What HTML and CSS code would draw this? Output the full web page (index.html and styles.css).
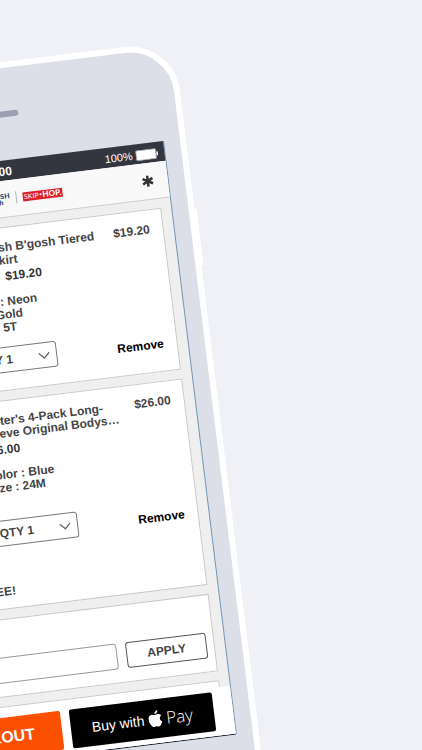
FILE: index.html
```html
<!DOCTYPE html>
<html lang="en">

<head>
    <meta charset="UTF-8">
    <meta name="viewport" content="width=device-width, initial-scale=1.0">
    <title>Shopping Bag</title>
    <link rel="stylesheet" href="styles.css">
</head>

<body>
    <div class="phone">
        <div class="side-button"></div>
        <div class="phone-top">
            <div class="speaker"></div>
        </div>

        <div class="screen">
            <div class="status-bar">
                <span class="carrier">Carrier</span>
                <span class="time">12:00</span>
                <span class="battery">100%
                    <svg class="battery-icon" width="23" height="11" viewBox="0 0 23 11">
                        <rect x="0.5" y="0.5" width="20" height="10" rx="1.5" fill="#fff" stroke="#a4a5ac" />
                        <rect x="21" y="3.5" width="1.5" height="4" rx="0.7" fill="#fff" />
                    </svg>
                </span>
            </div>

            <header class="header">
                <span></span>
                <div class="brands">
                    <span class="brand brand-carters">carter's</span>
                    <span class="brand brand-oshkosh">OSHKOSH<small>B'gosh</small></span>
                    <span class="brand-skiphop">SKIP<i></i><b>HOP.</b></span>
                </div>
                <svg class="header-icon" width="12" height="12" viewBox="0 0 12 12">
                    <path d="M6 0.4V11.6M1 3.3L11 8.7M11 3.3L1 8.7" stroke="#333" stroke-width="2.5" />
                </svg>
            </header>

            <main class="bag">
                <section class="card">
                    <div class="item">
                        <div class="item-photo"></div>
                        <div class="item-info">
                            <h2 class="item-title">OshKosh B'gosh Tiered<br>Tulle Skirt</h2>
                            <p class="item-price"><s>$32.00</s> <span>$19.20</span></p>
                            <p class="item-details">Color : Neon<br>Pink Gold<br>Size : 5T</p>
                        </div>
                        <span class="item-total">$19.20</span>
                    </div>
                    <div class="item-actions">
                        <div class="qty">
                            <select class="qty-select" aria-label="Skirt quantity">
                                <option>QTY 1</option>
                                <option>QTY 2</option>
                            </select>
                            <svg class="qty-arrow" width="12" height="7" viewBox="0 0 12 7">
                                <path d="M0.8 0.8L6 6L11.2 0.8" fill="none" stroke="#666" stroke-width="1.3" />
                            </svg>
                        </div>
                        <button class="remove-button">Remove</button>
                    </div>
                </section>

                <section class="card">
                    <div class="item">
                        <div class="item-photo"></div>
                        <div class="item-info">
                            <h2 class="item-title">Carter's 4-Pack Long-<br>Sleeve Original Bodys…</h2>
                            <p class="item-price">$26.00</p>
                            <p class="item-details">Color : Blue<br>Size : 24M</p>
                        </div>
                        <span class="item-total">$26.00</span>
                    </div>
                    <div class="item-actions">
                        <div class="qty">
                            <select class="qty-select" aria-label="Bodysuits quantity">
                                <option>QTY 1</option>
                                <option>QTY 2</option>
                            </select>
                            <svg class="qty-arrow" width="12" height="7" viewBox="0 0 12 7">
                                <path d="M0.8 0.8L6 6L11.2 0.8" fill="none" stroke="#666" stroke-width="1.3" />
                            </svg>
                        </div>
                        <button class="remove-button">Remove</button>
                    </div>
                    <p class="promo">Ships to you FREE!</p>
                </section>

                <section class="card coupon">
                    <label class="coupon-label" for="coupon">Coupon</label>
                    <div class="coupon-row">
                        <input type="text" id="coupon" class="coupon-input">
                        <button class="coupon-button">APPLY</button>
                    </div>
                </section>

                <section class="card"></section>
            </main>

            <footer class="footer">
                <button class="checkout-button">CHECKOUT</button>
                <button class="apple-button">
                    <span>Buy with</span>
                    <svg width="14" height="17" viewBox="0 0 14 17" fill="#fff">
                        <path d="M9.9 0C10 1.1 9.6 2.1 9 2.8C8.4 3.6 7.6 4 6.8 4C6.7 3 7.1 2 7.7 1.3C8.3 0.6 9.2 0.1 9.9 0Z" />
                        <path d="M13.2 5.8C12.1 6.5 11.5 7.5 11.5 8.8C11.5 10.2 12.3 11.4 13.6 11.9C13.3 12.9 12.8 13.8 12.2 14.7C11.5 15.7 10.8 16.6 9.8 16.6C8.8 16.6 8.4 16 7.2 16C6.1 16 5.6 16.6 4.7 16.6C3.7 16.6 2.9 15.7 2.1 14.5C0.9 12.8 0.1 10.6 0.1 8.6C0.1 5.7 2 4.1 3.9 4.1C5 4.1 6 4.8 6.8 4.8C7.5 4.8 8.6 4 10 4.1C11.3 4.1 12.5 4.7 13.2 5.8Z" />
                    </svg>
                    <span class="pay">Pay</span>
                </button>
            </footer>
        </div>
    </div>
</body>

</html>
```
FILE: styles.css
```css
* {
    box-sizing: border-box;
}

body {
    margin: 0;
    height: 100vh;
    overflow: hidden;
    background-color: #f0f1f7;
    font-family: "Liberation Sans", Arial, sans-serif;
    font-size: 12px;
    line-height: 13px;
    color: #444;
}

h2,
p {
    margin: 0;
    font-size: 12px;
    font-weight: bold;
}

button,
input,
select {
    font-family: inherit;
    font-size: 12px;
    font-weight: bold;
    color: inherit;
    padding: 0;
}

/* phone frame, tilted around the top right corner of the screen */
.phone {
    position: relative;
    display: flex;
    flex-direction: column;
    width: 382px;
    margin: 43px 0 0 -196px;
    padding: 0 17px 60px;
    background-color: #dcdfe8;
    border: 6px solid #fff;
    border-radius: 50px;
    transform: rotate(-7deg);
    transform-origin: 359px 98px;
}

.side-button {
    position: absolute;
    top: 163px;
    right: -8px;
    width: 4px;
    height: 58px;
    background-color: #fff;
    border-radius: 1px;
}

.phone-top {
    display: flex;
    justify-content: center;
    align-items: center;
    height: 92px;
}

.speaker {
    width: 56px;
    height: 6px;
    background-color: #9b9fb4;
    border-radius: 3px;
}

.screen {
    display: flex;
    flex-direction: column;
    height: 597px;
    background-color: #efefef;
    box-shadow: 1px 0 0 #7196b4, 0 1px 0 #10131f;
}

.status-bar {
    display: grid;
    grid-template-columns: 1fr auto 1fr;
    align-items: center;
    height: 20px;
    padding: 2px 6px 0 4px;
    background-color: #33353f;
    color: #fff;
    font-size: 11px;
}

.time {
    font-size: 12px;
    font-weight: bold;
}

.battery {
    display: flex;
    justify-content: flex-end;
    align-items: center;
    gap: 3px;
}

.header {
    display: grid;
    grid-template-columns: 1fr auto 1fr;
    align-items: center;
    height: 37px;
    padding: 0 14px;
    background-color: #f9f9f9;
    border-bottom: 1px solid #ccc;
}

.header-icon {
    justify-self: end;
}

.brands {
    display: flex;
    align-items: center;
    gap: 6px;
    font-family: Lato, sans-serif;
    line-height: 6px;
}

.brand {
    display: flex;
    flex-direction: column;
    align-items: flex-end;
    width: 36px;
    padding-right: 6px;
    border-right: 1px solid #a9b9c9;
    color: #1d3d73;
    font-size: 7px;
    font-weight: 900;
}

.brand small {
    padding-right: 7px;
    font-size: 7px;
}

.brand-skiphop {
    display: flex;
    justify-content: center;
    align-items: center;
    gap: 1px;
    width: 40px;
    height: 9px;
    background-color: #dc1f26;
    color: #fff;
    font-size: 7px;
}

.brand-skiphop i {
    width: 2px;
    height: 2px;
    background-color: #fff;
    border-radius: 50%;
}

.brand-skiphop b {
    font-size: 8px;
    font-weight: 900;
}

.bag {
    display: flex;
    flex-direction: column;
    flex: 1;
    gap: 9px;
    min-height: 0;
    padding: 9px 10px 0;
    overflow: hidden;
}

.card {
    flex-shrink: 0;
    min-height: 20px;
    padding: 13px 13px 10px;
    background-color: #fff;
    border: 1px solid #c8c8c8;
}

.item {
    display: flex;
}

.item-photo {
    width: 84px;
    height: 84px;
    margin-right: 12px;
    background-color: #e8eef2;
}

.item-info {
    flex: 1;
}

.item-total {
    font-weight: bold;
}

.item-price {
    margin-top: 3px;
    color: #333;
}

.item-price span {
    margin-left: 3px;
}

.item-details {
    min-height: 39px;
    margin-top: 12px;
}

.item-actions {
    display: flex;
    justify-content: space-between;
    align-items: flex-end;
    margin: 12px 0 7px 96px;
}

.qty {
    position: relative;
}

.qty-select {
    display: block;
    width: 85px;
    height: 26px;
    padding-left: 5px;
    background-color: #fff;
    border: 1px solid #777;
    border-radius: 3px;
    appearance: none;
}

.qty-arrow {
    position: absolute;
    top: 10px;
    right: 7px;
    pointer-events: none;
}

.remove-button {
    margin-bottom: 3px;
    background: none;
    border: none;
    color: #000;
    cursor: pointer;
}

.promo {
    margin-top: 39px;
}

.coupon {
    padding: 11px 7px 13px;
}

.coupon-label {
    display: block;
    margin-bottom: 13px;
    font-weight: bold;
}

.coupon-row {
    display: flex;
    gap: 9px;
}

.coupon-input {
    flex: 1;
    min-width: 0;
    height: 26px;
    padding: 0 6px;
    border: 1px solid #999;
    border-radius: 3px;
}

.coupon-button {
    width: 81px;
    height: 26px;
    background-color: #fff;
    border: 1px solid #555;
    border-radius: 3px;
    cursor: pointer;
}

.footer {
    display: flex;
    gap: 9px;
    padding: 4px 19px 5px;
    background-color: #fff;
}

.checkout-button,
.apple-button {
    flex: 1;
    height: 39px;
    border: none;
    border-radius: 2px;
    color: #fff;
    cursor: pointer;
}

.checkout-button {
    background-color: #fb4f02;
    font-size: 16px;
}

.apple-button {
    display: flex;
    justify-content: center;
    align-items: center;
    gap: 4px;
    background-color: #000;
    font-size: 14px;
    font-weight: normal;
}

.apple-button .pay {
    font-family: "Open Sans", sans-serif;
    font-size: 17px;
    font-weight: 300;
}
```
